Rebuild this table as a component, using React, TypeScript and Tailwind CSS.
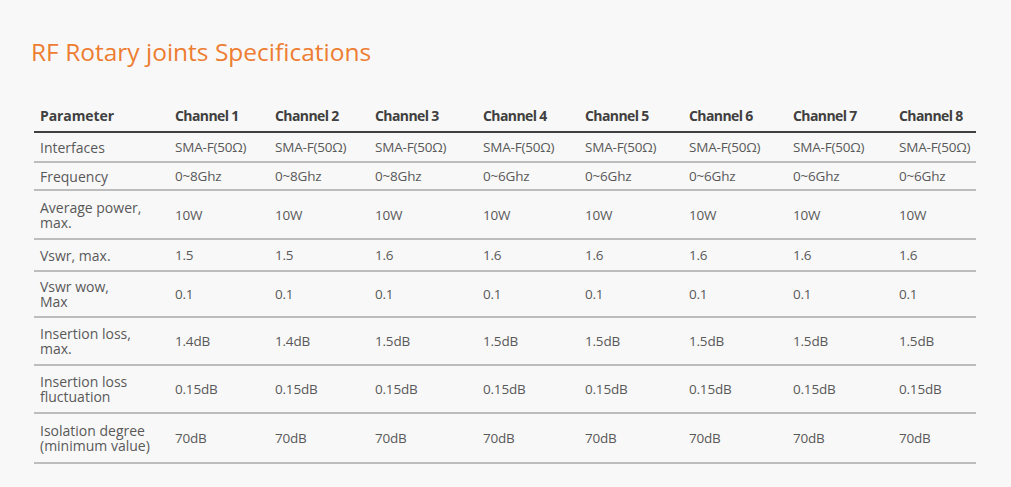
const channels = ["Channel 1", "Channel 2", "Channel 3", "Channel 4", "Channel 5", "Channel 6", "Channel 7", "Channel 8"];

const colWidths = ["w-[135px]", "w-[100px]", "w-[100px]", "w-[108px]", "w-[102px]", "w-[104px]", "w-[104px]", "w-[106px]", "w-[83px]"];

interface SpecRow {
  label: string[];
  values: string[];
  height: string;
}

const rows: SpecRow[] = [
  { label: ["Interfaces"], values: Array(8).fill("SMA-F(50Ω)"), height: "h-[30px]" },
  { label: ["Frequency"], values: ["0~8Ghz", "0~8Ghz", "0~8Ghz", "0~6Ghz", "0~6Ghz", "0~6Ghz", "0~6Ghz", "0~6Ghz"], height: "h-[28px]" },
  { label: ["Average power,", "max."], values: Array(8).fill("10W"), height: "h-[49px]" },
  { label: ["Vswr, max."], values: ["1.5", "1.5", "1.6", "1.6", "1.6", "1.6", "1.6", "1.6"], height: "h-[32px]" },
  { label: ["Vswr wow,", "Max"], values: Array(8).fill("0.1"), height: "h-[46px]" },
  { label: ["Insertion loss,", "max."], values: ["1.4dB", "1.4dB", "1.5dB", "1.5dB", "1.5dB", "1.5dB", "1.5dB", "1.5dB"], height: "h-[48px]" },
  { label: ["Insertion loss", "fluctuation"], values: Array(8).fill("0.15dB"), height: "h-[48px]" },
  { label: ["Isolation degree", "(minimum value)"], values: Array(8).fill("70dB"), height: "h-[50px]" },
];

const App = () => {
  return (
    <div className="w-[1011px] h-[487px] bg-[#f8f8f8] font-['Open_Sans',sans-serif] overflow-hidden">
      <h1 className="pl-[31px] pt-[34px] text-[24.5px] leading-[36px] text-[#ed7d31]">
        RF Rotary joints Specifications
      </h1>

      <table className="ml-[34px] mt-[38px] border-collapse table-fixed w-[942px]">
        <thead>
          <tr className="h-[24px] border-b-2 border-[#404040] align-bottom">
            <th className={`${colWidths[0]} pl-[6px] pb-[7px] text-left text-[14px] leading-[16px] font-bold text-[#404040] tracking-[-0.1px]`}>
              Parameter
            </th>
            {channels.map((ch, i) => (
              <th
                key={ch}
                className={`${colWidths[i + 1]} pl-[6px] pb-[7px] text-left text-[14px] leading-[16px] font-bold text-[#404040] tracking-[-0.6px]`}
              >
                {ch}
              </th>
            ))}
          </tr>
        </thead>
        <tbody>
          {rows.map((row, idx) => (
            <tr key={idx} className={`${row.height} border-b-2 border-[#bdbdbd]`}>
              <td className="pl-[6px] text-[14px] leading-[15px] text-[#595959]">
                {row.label.map((l) => (
                  <div key={l}>{l}</div>
                ))}
              </td>
              {row.values.map((v, i) => (
                <td key={i} className="pl-[6px] text-[13.5px] leading-[16px] text-[#595959] tracking-[-0.2px] whitespace-nowrap">
                  {v}
                </td>
              ))}
            </tr>
          ))}
        </tbody>
      </table>
    </div>
  );
};

export default App;
